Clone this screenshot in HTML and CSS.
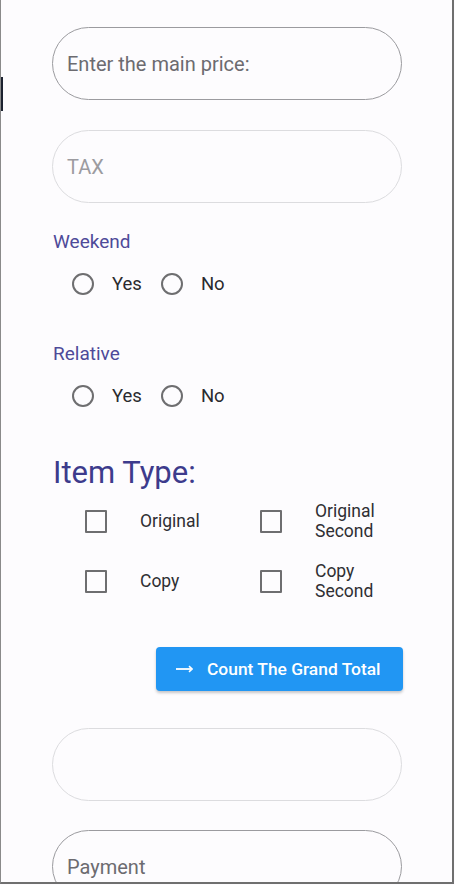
FILE: index.html
```html
<!DOCTYPE html>
<html>
<head>
<meta charset="utf-8">
<link rel="stylesheet" href="styles.css">
</head>
<body>
<div class="frame">
  <div class="edge-mark"></div>
  <main class="form">
    <div class="field field-strong"><span class="ph ph-dark">Enter the main price:</span></div>
    <div class="field field-light"><span class="ph ph-light">TAX</span></div>

    <section class="group group-weekend">
      <div class="label">Weekend</div>
      <div class="radios">
        <span class="radio"></span><span class="opt">Yes</span>
        <span class="radio"></span><span class="opt">No</span>
      </div>
    </section>

    <section class="group group-relative">
      <div class="label">Relative</div>
      <div class="radios">
        <span class="radio"></span><span class="opt">Yes</span>
        <span class="radio"></span><span class="opt">No</span>
      </div>
    </section>

    <h2 class="title">Item Type:</h2>
    <div class="checks">
      <div class="check"><span class="box"></span><span class="ctext">Original</span></div>
      <div class="check"><span class="box"></span><span class="ctext">Original<br>Second</span></div>
      <div class="check"><span class="box"></span><span class="ctext">Copy</span></div>
      <div class="check"><span class="box"></span><span class="ctext">Copy<br>Second</span></div>
    </div>

    <div class="btn-row">
      <button class="btn">
        <svg class="arrow" width="17" height="10" viewBox="0 0 17 10"><path d="M0 5H15" stroke="#fff" stroke-width="1.8"/><path d="M13 2.2L16.2 5L13 7.8" fill="none" stroke="#fff" stroke-width="1.6"/></svg>
        <span>Count The Grand Total</span>
      </button>
    </div>

    <div class="field field-light field-empty"></div>
    <div class="field field-strong"><span class="ph ph-dark">Payment</span></div>
  </main>
</div>
</body>
</html>
```

FILE: styles.css
```css
* { box-sizing: border-box; }
html, body { margin: 0; padding: 0; }
body {
  width: 455px;
  height: 885px;
  overflow: hidden;
  background: #fdfcfe;
  font-family: Roboto, "Noto Sans", sans-serif;
}
.frame {
  position: relative;
  width: 454px;
  height: 884px;
  border-left: 1px solid #8a8a8a;
  border-right: 2px solid #6f6f6f;
  border-bottom: 2px solid #6f6f6f;
  overflow: hidden;
  background: #fdfcfe;
}
.edge-mark {
  position: absolute;
  left: -1px;
  top: 77px;
  width: 3px;
  height: 34px;
  background: #1c2230;
}
.form {
  padding: 27px 0 0 51px;
  width: 402px;
}
.field {
  width: 350px;
  height: 73px;
  border-radius: 37px;
  display: flex;
  align-items: center;
  padding-left: 14px;
}
.field-strong { border: 1.5px solid #9b9b9f; }
.field-light { border: 1px solid #dcdcdf; margin-top: 30px; }
.field-empty { margin-top: 37px; }
.field-strong + .field-strong, .field-empty + .field-strong { margin-top: 29px; }
.ph { font-size: 20px; }
.ph-dark { color: #6c6b70; }
.ph-light { color: #9c9ba0; }

.group { padding-left: 1px; }
.group-weekend { margin-top: 28px; }
.group-relative { margin-top: 48px; }
.label {
  font-size: 19px;
  color: #4e4a99;
  line-height: 22px;
}
.radios {
  display: flex;
  align-items: center;
  margin-top: 20px;
  padding-left: 19px;
  height: 22px;
}
.radio {
  width: 22px;
  height: 22px;
  border: 2px solid #6e6e70;
  border-radius: 50%;
  flex: none;
}
.opt {
  font-size: 18.5px;
  color: #2a2a2e;
  margin-left: 18px;
  margin-right: 19px;
}

.title {
  font-weight: 400;
  font-size: 31px;
  color: #3d3b8c;
  margin: 48px 0 0 1px;
  line-height: 36px;
}
.checks {
  display: grid;
  grid-template-columns: 175px 150px;
  row-gap: 18px;
  margin-top: 9px;
  padding-left: 33px;
}
.check {
  display: flex;
  align-items: center;
  height: 42px;
}
.box {
  width: 22px;
  height: 23px;
  border: 2px solid #6e6e70;
  border-radius: 1px;
  flex: none;
}
.ctext {
  font-size: 17.5px;
  color: #2f2f33;
  margin-left: 33px;
  line-height: 20px;
}

.btn-row {
  display: flex;
  justify-content: flex-end;
  margin-top: 45px;
}
.btn {
  width: 247px;
  height: 44px;
  background: #2196f3;
  border: none;
  border-radius: 4px;
  box-shadow: 0 2px 3px rgba(0,0,0,0.22);
  display: flex;
  align-items: center;
  padding: 0 0 0 20px;
  color: #fff;
  font-family: Roboto, sans-serif;
  font-weight: 500;
  font-size: 17.4px;
}
.arrow { margin-right: 14px; }
```
